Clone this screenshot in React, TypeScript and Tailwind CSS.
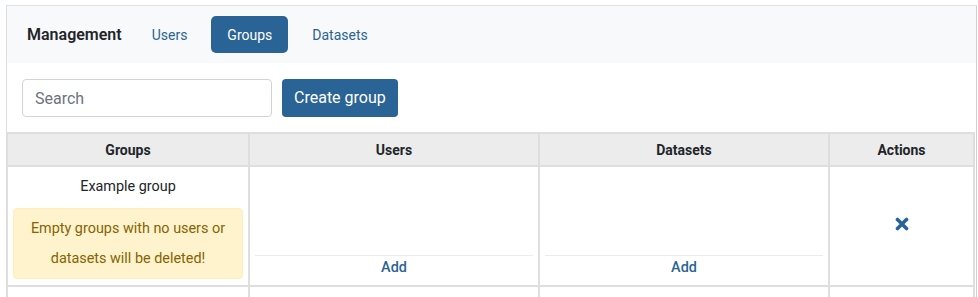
import React from "react";

const tabs = [
  { label: "Users", active: false },
  { label: "Groups", active: true },
  { label: "Datasets", active: false },
];

const DeleteIcon = () => (
  <svg width="14" height="14" viewBox="0 0 14 14" aria-label="Delete">
    <path d="M2.5 2.5 L11.5 11.5 M11.5 2.5 L2.5 11.5" stroke="#2a6395" strokeWidth="3.6" strokeLinecap="round" />
  </svg>
);

const AddCell = () => (
  <td className="border-2 border-[#dedede] px-[5px] pb-[6px] align-bottom">
    <div className="border-t border-[#ececec] text-center leading-[23px] font-medium text-[#2a6395]">
      Add
    </div>
  </td>
);

export default function App() {
  return (
    <div className="bg-white min-h-[297px] pt-[5px] pl-[6px] font-['Roboto',sans-serif] text-sm text-[#212529]">
      <div className="w-[971px] border-t border-l border-r border-t-[#e2e2e2] border-l-[#dedede] border-r-[#cfcfcf] h-[292px] overflow-hidden">
        {/* nav */}
        <div className="bg-[#f8f9fa] h-[57px] flex items-center pl-5">
          <span className="text-base font-semibold mr-[14px]">Management</span>
          <div className="flex gap-2">
            {tabs.map((t) => (
              <span
                key={t.label}
                className={
                  t.active
                    ? "h-[37px] px-4 flex items-center rounded-[5px] bg-[#2a6395] text-white"
                    : "h-[37px] px-4 flex items-center text-[#2a6395]"
                }
              >
                {t.label}
              </span>
            ))}
          </div>
        </div>

        {/* toolbar */}
        <div className="flex items-center gap-[10px] px-[15px] pt-4 pb-[15px]">
          <input
            type="text"
            placeholder="Search"
            className="w-[250px] h-[38px] px-3 border border-[#ced4da] rounded-[4px] text-base placeholder:text-[#6c757d] outline-none"
          />
          <button className="h-[38px] px-3 rounded-[4px] bg-[#2a6395] text-white text-base">
            Create group
          </button>
        </div>

        {/* table */}
        <table className="-ml-px w-[969px] table-fixed border-collapse">
          <colgroup>
            <col className="w-[242px]" />
            <col className="w-[290px]" />
            <col className="w-[290px]" />
            <col />
          </colgroup>
          <thead>
            <tr className="bg-[#ececec]">
              {["Groups", "Users", "Datasets", "Actions"].map((h) => (
                <th key={h} className="border-2 border-[#dedede] h-[33px] font-bold text-center">
                  {h}
                </th>
              ))}
            </tr>
          </thead>
          <tbody className="text-[14.4px]">
            <tr>
              <td className="border-2 border-[#dedede] px-[5px] pb-[6px] align-top">
                <div className="text-center leading-5 pt-[10px]">Example group</div>
                <div className="mt-[11px] h-[71px] rounded-[4px] bg-[#fff3cd] border border-[#ffeeba] text-[#856404] text-center leading-[30px] flex flex-col justify-center">
                  <div>Empty groups with no users or</div>
                  <div>datasets will be deleted!</div>
                </div>
              </td>
              <AddCell />
              <AddCell />
              <td className="border-2 border-[#dedede] text-center align-middle">
                <span className="inline-flex pt-[2px]">
                  <DeleteIcon />
                </span>
              </td>
            </tr>
            <tr>
              <td className="border-2 border-[#dedede] h-[30px]" />
              <td className="border-2 border-[#dedede]" />
              <td className="border-2 border-[#dedede]" />
              <td className="border-2 border-[#dedede]" />
            </tr>
          </tbody>
        </table>
      </div>
    </div>
  );
}
